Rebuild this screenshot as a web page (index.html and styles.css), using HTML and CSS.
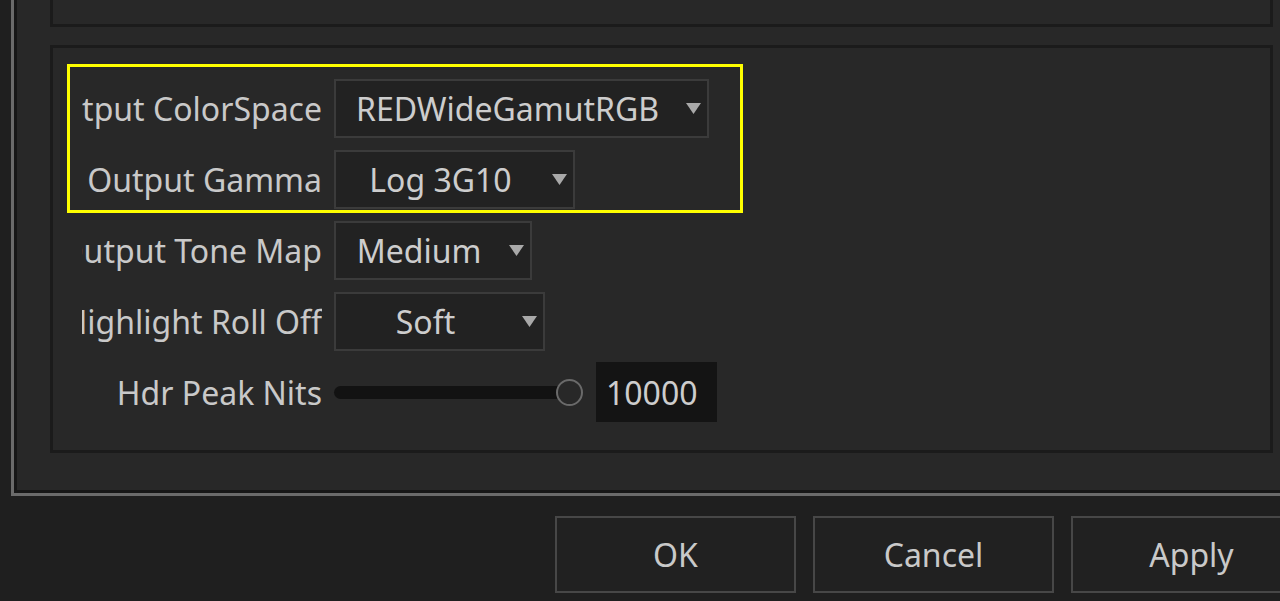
FILE: index.html
```html
<!DOCTYPE html>
<html>
<head>
<meta charset="utf-8">
<link rel="stylesheet" href="styles.css">
</head>
<body>
<div class="frame">
  <div class="frame-inner">
    <div class="group group-top"></div>
    <div class="group group-main">
      <div class="row">
        <div class="label"><span>Output ColorSpace</span></div>
        <div class="combo combo-w1"><span class="combo-text">REDWideGamutRGB</span><svg class="arrow" viewBox="0 0 15 11"><polygon points="0,0 15,0 7.5,11"/></svg></div>
      </div>
      <div class="row">
        <div class="label"><span>Output Gamma</span></div>
        <div class="combo combo-w2"><span class="combo-text">Log 3G10</span><svg class="arrow" viewBox="0 0 15 11"><polygon points="0,0 15,0 7.5,11"/></svg></div>
      </div>
      <div class="row">
        <div class="label"><span>Output Tone Map</span></div>
        <div class="combo combo-w3"><span class="combo-text">Medium</span><svg class="arrow" viewBox="0 0 15 11"><polygon points="0,0 15,0 7.5,11"/></svg></div>
      </div>
      <div class="row">
        <div class="label"><span>Highlight Roll Off</span></div>
        <div class="combo combo-w4"><span class="combo-text">Soft</span><svg class="arrow" viewBox="0 0 15 11"><polygon points="0,0 15,0 7.5,11"/></svg></div>
      </div>
      <div class="row row-slider">
        <div class="label"><span>Hdr Peak Nits</span></div>
        <div class="slider">
          <div class="track"></div>
          <div class="knob"></div>
        </div>
        <div class="value">10000</div>
      </div>
    </div>
  </div>
</div>
<div class="buttons">
  <div class="btn">OK</div>
  <div class="btn">Cancel</div>
  <div class="btn">Apply</div>
</div>
<div class="highlight"></div>
</body>
</html>
```
FILE: styles.css
```css
* { box-sizing: border-box; }
html, body {
  margin: 0;
  padding: 0;
}
body {
  width: 1280px;
  height: 601px;
  overflow: hidden;
  background: #1f1f1f;
  font-family: "Noto Sans", "Open Sans", sans-serif;
  font-size: 32px;
  color: #c9c9c9;
  position: relative;
}
.frame {
  margin-left: 11px;
  width: 1320px;
  border-left: 3px solid #6b6b6b;
  border-bottom: 3px solid #6b6b6b;
}
.frame-inner {
  background: #282828;
  border-left: 3px solid #171717;
  border-bottom: 3px solid #171717;
  padding-left: 33px;
  padding-bottom: 37px;
}
.group {
  width: 1223px;
  border: 3px solid #1b1b1b;
  background: #282828;
}
.group-top {
  height: 27px;
  border-top: none;
}
.group-main {
  margin-top: 18px;
  height: 408px;
  padding: 31px 0 0 29px;
  display: flex;
  flex-direction: column;
  gap: 12px;
}
.row {
  display: flex;
  align-items: center;
  height: 59px;
  gap: 12px;
}
.row-slider {
  height: 60px;
  margin-top: -1px;
  gap: 0;
}
.label {
  width: 240px;
  display: flex;
  justify-content: flex-end;
  overflow: hidden;
  white-space: nowrap;
  flex-shrink: 0;
}
.row-slider .label {
  margin-right: 12px;
}
.combo {
  height: 59px;
  border: 2px solid #3b3b3b;
  background: #222222;
  display: flex;
  align-items: center;
  color: #cdcdcd;
}
.combo-text {
  flex: 1;
  text-align: center;
  white-space: nowrap;
}
.arrow {
  width: 15px;
  height: 11px;
  margin: 0 6px 0 7px;
  fill: #a9a9a9;
  flex-shrink: 0;
}
.combo-w1 { width: 375px; }
.combo-w2 { width: 241px; }
.combo-w3 { width: 198px; }
.combo-w4 { width: 211px; }
.slider {
  width: 249px;
  display: flex;
  align-items: center;
}
.track {
  width: 236px;
  height: 13px;
  border-radius: 7px;
  background: #121212;
}
.knob {
  width: 27px;
  height: 27px;
  border-radius: 50%;
  border: 2px solid #6a6a6a;
  background: #282828;
  margin-left: -14px;
}
.value {
  margin-left: 13px;
  width: 121px;
  height: 60px;
  background: #141414;
  display: flex;
  align-items: center;
  padding-left: 10px;
  color: #cdcdcd;
}
.buttons {
  display: flex;
  gap: 17px;
  margin-top: 20px;
  padding-left: 555px;
  width: 1400px;
}
.btn {
  width: 241px;
  height: 77px;
  flex-shrink: 0;
  border: 2px solid #474747;
  background: #212121;
  display: flex;
  align-items: center;
  justify-content: center;
  color: #c9c9c9;
}
.highlight {
  position: absolute;
  left: 67px;
  top: 64px;
  width: 676px;
  height: 149px;
  border: 3px solid #ffff00;
  pointer-events: none;
}
```
